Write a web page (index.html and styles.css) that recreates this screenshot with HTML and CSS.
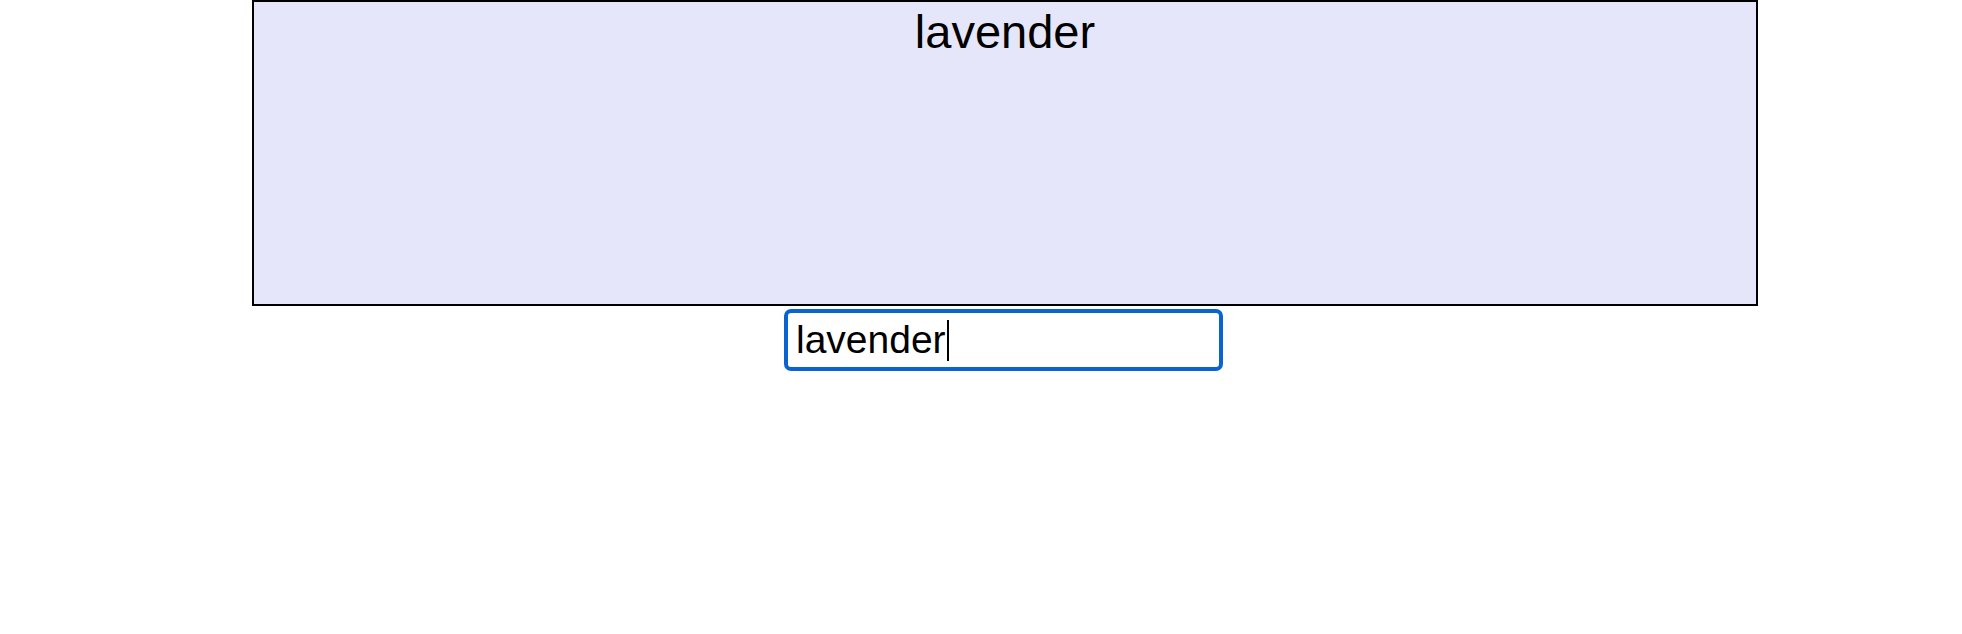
FILE: index.html
```html
<!DOCTYPE html>
<html lang="en">
<head>
  <meta charset="UTF-8" />
  <title>lavender</title>
  <link rel="stylesheet" href="styles.css">
</head>
<body>
  <main class="stage">
    <div class="swatch">
      <h1 class="swatch-name">lavender</h1>
    </div>
    <div class="input-row">
      <div class="color-input"><span class="typed">lavender</span><span class="caret"></span></div>
    </div>
  </main>
</body>
</html>
```

FILE: styles.css
```css
body {
  margin: 0;
  padding: 0;
  background-color: #fff;
  color: #000;
  font-family: "Liberation Sans", Arial, sans-serif;
}

.stage {
  width: 1506px;
  margin-left: 252px;
}

.swatch {
  box-sizing: border-box;
  height: 306px;
  border: 2px solid #000;
  background-color: #e6e6fa;
  text-align: center;
}

.swatch-name {
  margin: 0;
  padding-top: 6px;
  font-size: 47px;
  font-weight: normal;
  line-height: 48px;
}

.input-row {
  display: flex;
  justify-content: center;
  margin-top: 3px;
  padding-right: 3px;
}

.color-input {
  box-sizing: border-box;
  width: 439px;
  height: 62px;
  border: 4px solid #0964d2;
  border-radius: 7px;
  padding: 0 8px;
  display: flex;
  align-items: center;
  font-size: 39px;
}

.caret {
  display: inline-block;
  width: 2px;
  height: 41px;
  margin-left: 1px;
  background-color: #000;
}
```
